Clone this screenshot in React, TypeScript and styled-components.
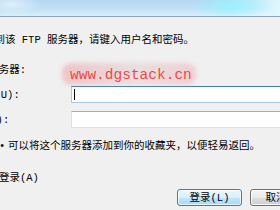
import React from 'react';
import styled, { createGlobalStyle } from 'styled-components';

const GlobalStyle = createGlobalStyle`
    html, body {
        margin: 0;
        padding: 0;
        background: #f0f0f0;
        overflow: hidden;
    }
`;

const Window = styled.div`
    position: relative;
    width: 280px;
    height: 210px;
    overflow: hidden;
    background: #f0f0f0;
    font-family: 'Liberation Mono', 'Noto Sans CJK SC', monospace;
    font-size: 10.5px;
    line-height: 14px;
    color: #000;
`;

const TitleBar = styled.div`
    height: 16px;
    border-bottom: 1px solid #8fa3b3;
    background:
        radial-gradient(ellipse 42px 12px at 232px 6px, rgba(150, 244, 255, 0.95), rgba(150, 244, 255, 0) 100%),
        radial-gradient(ellipse 30px 10px at 12px 4px, rgba(230, 244, 252, 0.8), rgba(230, 244, 252, 0) 100%),
        linear-gradient(90deg, rgba(190, 220, 245, 0) 0%, rgba(190, 220, 245, 0) 80%, rgba(225, 250, 255, 0.9) 100%),
        linear-gradient(180deg, #b6d6f2 0%, #c2e0f5 55%, #d6f1fb 100%);
`;

const Body = styled.div`
    width: 340px;
    margin-left: -37px;
    display: flex;
    flex-direction: column;
`;

const Intro = styled.div`
    margin-top: 16px;
    white-space: nowrap;
`;

const Form = styled.div`
    margin-top: 14px;
    display: grid;
    grid-template-columns: 108px 1fr;
    grid-auto-rows: 17px;
    row-gap: 8px;
    align-items: center;
`;

const Label = styled.div`
    white-space: nowrap;
`;

const Value = styled.div``;

const TextBox = styled.div<{ $focused?: boolean }>`
    height: 17px;
    box-sizing: border-box;
    background: #fff;
    border: 1px solid ${p => (p.$focused ? '#a6c8e2' : '#dbdfe6')};
    border-top-color: ${p => (p.$focused ? '#3d7bad' : '#abadb3')};
    display: flex;
    align-items: center;
    padding-left: 2px;
`;

const Caret = styled.span`
    width: 1px;
    height: 11px;
    background: #000;
`;

const Note = styled.div`
    margin-top: 11px;
    padding-left: 36px;
    white-space: nowrap;
    display: flex;
`;

const Bullet = styled.span`
    width: 9px;
`;

const CheckRow = styled.label`
    margin-top: 18px;
    height: 14px;
    display: flex;
    align-items: center;
    gap: 4px;
    white-space: nowrap;
`;

const Check = styled.span`
    width: 11px;
    height: 11px;
    box-sizing: border-box;
    border: 1px solid #8f8f8f;
    background: linear-gradient(135deg, #dcdcdc, #fff);
`;

const Buttons = styled.div`
    margin-top: 4px;
    padding-left: 214px;
    display: flex;
    gap: 8px;
`;

const Button = styled.div<{ $primary?: boolean; $width: number }>`
    width: ${p => p.$width}px;
    height: 17px;
    flex: none;
    box-sizing: border-box;
    border-radius: 3px;
    border: 1px solid ${p => (p.$primary ? '#3c7fb1' : '#707070')};
    box-shadow: inset 0 0 0 1px ${p => (p.$primary ? 'rgba(255,255,255,0.7)' : 'rgba(255,255,255,0.8)')};
    background: ${p =>
        p.$primary
            ? 'linear-gradient(180deg, #eaf6fd 0%, #d9f0fc 50%, #bee6fd 51%, #a7d9f5 100%)'
            : 'linear-gradient(180deg, #f2f2f2 0%, #ebebeb 50%, #dddddd 51%, #cfcfcf 100%)'};
    display: flex;
    align-items: center;
    justify-content: center;
    white-space: nowrap;
    line-height: 14px;
`;

const Watermark = styled.div`
    position: absolute;
    left: 70px;
    top: 67px;
    font-family: 'Liberation Mono', monospace;
    font-size: 14.5px;
    line-height: 17px;
    color: rgba(236, 56, 56, 0.92);
    white-space: nowrap;

    &::before {
        content: '';
        position: absolute;
        left: -8px;
        right: -4px;
        top: -4px;
        bottom: -1px;
        border-radius: 9px;
        background: linear-gradient(90deg, rgba(238, 160, 165, 0.55), rgba(225, 200, 202, 0.45) 55%, rgba(240, 175, 178, 0.5));
        filter: blur(2px);
    }
`;

const WatermarkText = styled.span`
    position: relative;
`;

const App = () => (
    <Window>
        <GlobalStyle />
        <TitleBar />
        <Body>
            <Intro>要登录到该 FTP 服务器，请键入用户名和密码。</Intro>
            <Form>
                <Label>FTP 服务器:</Label>
                <Value />
                <Label>用户名(U):</Label>
                <TextBox $focused>
                    <Caret />
                </TextBox>
                <Label>密码(P):</Label>
                <TextBox />
            </Form>
            <Note>
                <Bullet>•</Bullet>
                可以将这个服务器添加到你的收藏夹，以便轻易返回。
            </Note>
            <CheckRow>
                <Check />
                匿名登录(A)
            </CheckRow>
            <Buttons>
                <Button $primary $width={65}>
                    登录(L)
                </Button>
                <Button $width={52}>取消</Button>
            </Buttons>
        </Body>
        <Watermark>
            <WatermarkText>www.dgstack.cn</WatermarkText>
        </Watermark>
    </Window>
);

export default App;
